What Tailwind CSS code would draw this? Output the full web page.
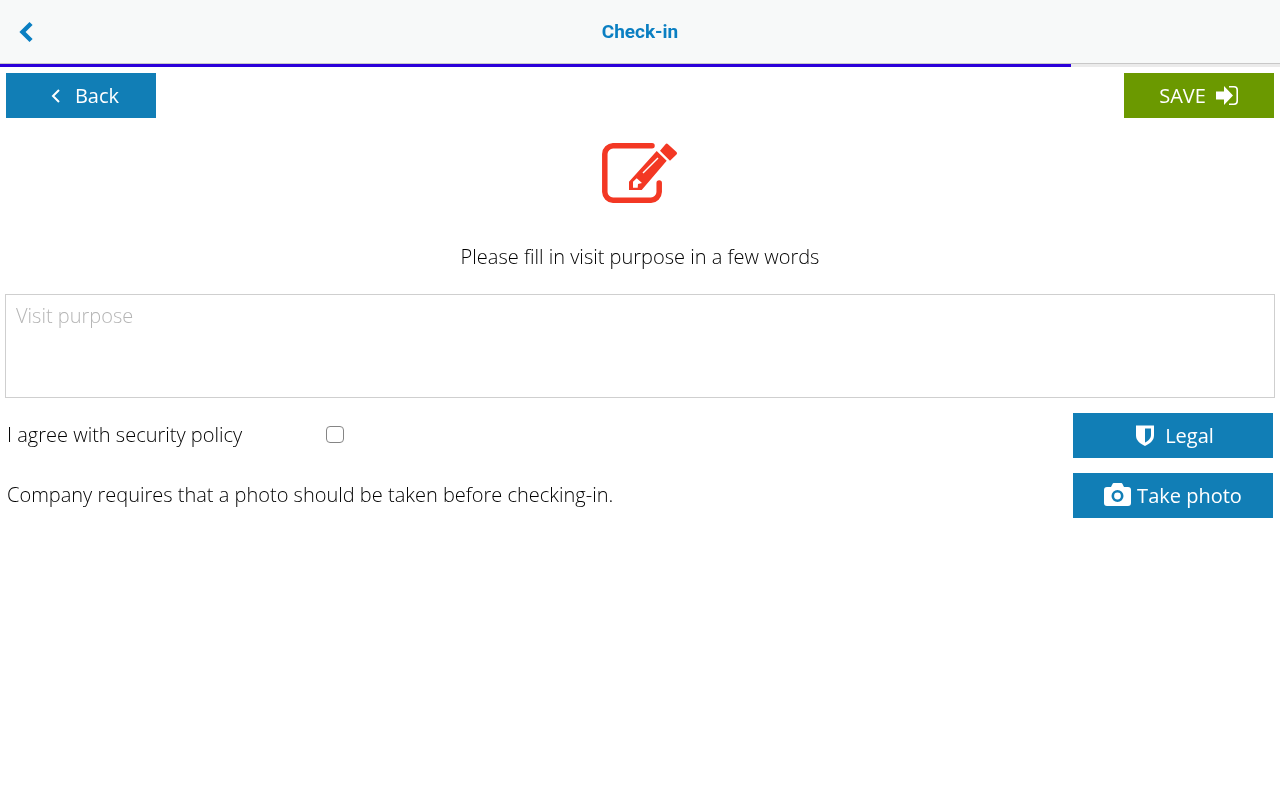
<!DOCTYPE html>
<html lang="en">
<head>
  <meta charset="UTF-8" />
  <title>Check-in</title>
  <script src="https://cdn.jsdelivr.net/npm/@tailwindcss/browser@4"></script>
</head>
<body class="bg-white min-h-screen font-['Open_Sans',sans-serif] text-black font-light text-[20px]">
<div class="will-change-transform">

  <header class="h-[64px] bg-[#f7f9f9] border-b border-[#c8c8c8] flex items-center relative">
    <svg class="ml-[18px] w-[16px] h-[22px]" viewBox="0 0 16 22" fill="none" stroke="#0a7fc2" stroke-width="4.4" stroke-linecap="square"><path d="M11.500 4 L4.500 11 L11.500 18"/></svg>
    <h1 class="absolute inset-x-0 pt-[2px] text-center font-['Roboto',sans-serif] font-bold text-[19px] text-[#0a7fc2]">Check-in</h1>
  </header>

  <div class="h-[3px] bg-[#ebebeb]">
    <div class="h-full bg-[#2b00d9] w-[1071px]"></div>
  </div>

  <div class="flex justify-between px-[6px] pt-[6px]">
    <button class="w-[150px] h-[45px] pl-[8px] bg-[#117eb6] text-white font-normal flex items-center justify-center gap-[14px]">
      <svg class="w-[10px] h-[16px]" viewBox="0 0 10 16" fill="none" stroke="white" stroke-width="2"><path d="M8 2 L2 8 L8 14"/></svg>
      <span>Back</span>
    </button>
    <button class="w-[150px] h-[45px] pr-[1px] bg-[#6b9900] text-white font-normal flex items-center justify-center gap-[10px]">
      <span>SAVE</span>
      <svg class="w-[22px] h-[19px]" viewBox="0 0 22 19" fill="white">
        <path d="M0 5.500h8V0l9 9.500-9 9.500v-5.500H0z"/>
        <path d="M13 0h5a4 4 0 0 1 4 4v11a4 4 0 0 1-4 4h-5v-1.600h5a2.400 2.400 0 0 0 2.400-2.400V4A2.400 2.400 0 0 0 18 1.600h-5z"/>
      </svg>
    </button>
  </div>

  <div class="flex justify-center pt-[24px]">
    <svg class="w-[78px] h-[62px]" viewBox="0 0 78 62" fill="#f33824">
      <path fill="none" stroke="#f33824" stroke-width="5.500" stroke-linecap="round" d="M51 3.800H12A8.500 8.500 0 0 0 3.800 12V50A8.500 8.500 0 0 0 12 58.200H50A8.500 8.500 0 0 0 58.200 50V41"/>
      <path fill-rule="evenodd" d="M28 39.700 L55.700 9 L65.700 18.700 L40.700 48 H28z M32 39.700 L35.700 36.300 L41 41 L37 42 L36.700 45.700 L32 45.700z"/>
      <path d="M59 8.700 L64.500 2.200 Q65.700 1 67 2.200 L75.500 10 Q76.700 11.300 75.500 12.500 L69 18.700z"/>
      <path fill="none" stroke="white" stroke-width="1.500" d="M42 31 L57 16"/>
    </svg>
  </div>

  <p class="text-center mt-[39px] leading-[28px]">Please fill in visit purpose in a few words</p>

  <div class="px-[5px] mt-[23px]">
    <textarea placeholder="Visit purpose" class="block w-full h-[104px] border border-[#cfcfcf] px-[10px] py-[6px] resize-none outline-none placeholder:text-[#b5b5b5]"></textarea>
  </div>

  <div class="flex items-center justify-between px-[7px] mt-[15px] h-[45px]">
    <div class="flex items-center">
      <span class="w-[319px] mb-[2px]">I agree with security policy</span>
      <input type="checkbox" class="appearance-none w-[18px] h-[17px] mb-[2px] border-[1.5px] border-[#858585] rounded-[4px] bg-white" />
    </div>
    <button class="w-[200px] h-[45px] pl-[4px] bg-[#117eb6] text-white font-normal flex items-center justify-center gap-[11px]">
      <svg class="w-[18px] h-[21px]" viewBox="0 0 18 21" fill="white"><path fill-rule="evenodd" d="M0 .5h18v10c0 5-4 8-9 10.500C4 18.500 0 15.500 0 10.500z M9 3.500v14c3-1.500 6-4 6-7.500V3.500z"/></svg>
      <span>Legal</span>
    </button>
  </div>

  <div class="flex items-center justify-between px-[7px] mt-[15px] h-[45px]">
    <span class="mb-[2px]">Company requires that a photo should be taken before checking-in.</span>
    <button class="w-[200px] h-[45px] bg-[#117eb6] text-white font-normal flex items-center justify-center gap-[6px]">
      <svg class="w-[27px] h-[23px] mb-[2px]" viewBox="0 0 27 23" fill="white"><path fill-rule="evenodd" d="M3 4h4l1.500-3a1.500 1.500 0 0 1 1.500-1h7a1.500 1.500 0 0 1 1.500 1L20 4h4a3 3 0 0 1 3 3v13a3 3 0 0 1-3 3H3a3 3 0 0 1-3-3V7a3 3 0 0 1 3-3z M13.500 7a6 6 0 1 0 0 12a6 6 0 0 0 0-12z M13.500 9.600a3.400 3.400 0 1 1 0 6.800a3.400 3.400 0 0 1 0-6.800z"/></svg>
      <span>Take photo</span>
    </button>
  </div>

</div>
</body>
</html>
